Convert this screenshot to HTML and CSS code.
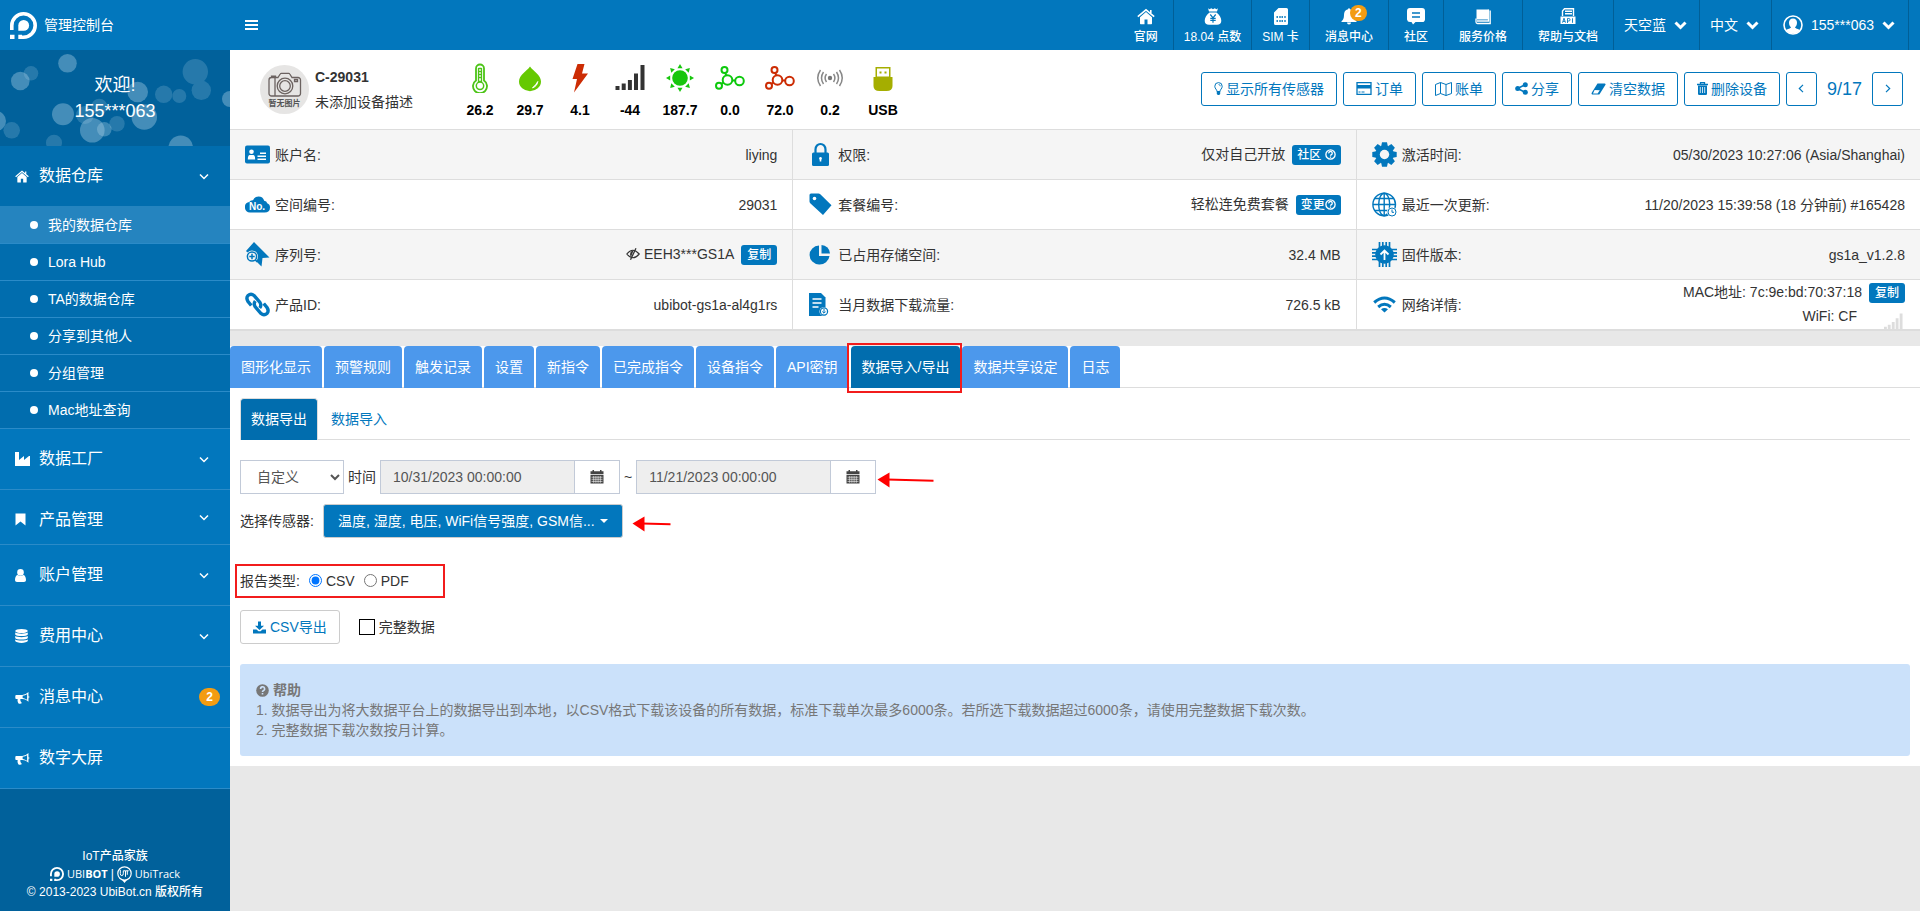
FILE: index.html
```html
<!DOCTYPE html>
<html lang="zh-CN">
<head>
<meta charset="utf-8">
<title>管理控制台</title>
<link rel="stylesheet" href="styles.css">
</head>
<body>
<svg class="defs" aria-hidden="true">
  <symbol id="logo" viewBox="0 0 27 27"><path d="M1.800 18V13.500A11.700 11.700 0 1 1 13.500 25.200H9" fill="none" stroke="currentColor" stroke-width="3.600"/><path d="M8.300 18.800V13.400a5.400 5.400 0 1 1 5.400 5.400z" fill="currentColor"/><path d="M0 22.800h4.500V27H0zM8.300 22.800H12V27H8.300z" fill="currentColor"/></symbol>
  <symbol id="chev" viewBox="0 0 10 7"><path d="M1 1.500l4 4 4-4" fill="none" stroke="currentColor" stroke-width="1.500"/></symbol>
  <symbol id="chevbold" viewBox="0 0 13 9"><path d="M1.500 1.500l5 5 5-5" fill="none" stroke="currentColor" stroke-width="3"/></symbol>
  <symbol id="home" viewBox="0 0 18 16"><path d="M9 3.600L3 8.700V15a.7.7 0 0 0 .7.700H7.500V11h3v4.700h3.800a.7.7 0 0 0 .7-.7V8.700z" fill="currentColor"/><path d="M.800 8.200L9 1.300l8.200 6.900M13.800 1.500v3" fill="none" stroke="currentColor" stroke-width="1.600"/></symbol>
  <symbol id="horn" viewBox="0 0 14.500 12"><path d="M1.500 3.500H7C9.500 3.500 11.500 2.200 13 .8v9.400C11.500 8.800 9.500 7.500 7 7.500H5.200c-.2 1.800.4 2.700 1.500 3.800-.7 1-2.700 1-3.500.2-.8-1.300-.9-2.500-.6-4H1.500C.7 7.500.3 7 .3 6.200V4.800c0-.8.4-1.300 1.200-1.300z" fill="currentColor"/><path d="M11.700 2.800v5.400C10.500 7.400 9 6.700 7.400 6.500V4.400C9 4.200 10.500 3.600 11.700 2.800z" fill="#0277bd"/><path d="M13 4.300a1.400 1.400 0 0 1 0 2.600z" fill="currentColor"/></symbol>
  <symbol id="cal" viewBox="0 0 14 14"><path d="M.5 1.200h2V0H4v1.200h6V0h1.500v1.200h2v3H.5zM.5 5h13v8.500H.5z" fill="currentColor"/><path d="M1.500 7.200h11M1.500 9.300h11M1.500 11.400h11M3.700 6v6.800M5.900 6v6.800M8.100 6v6.800M10.300 6v6.800" stroke="#fff" stroke-width=".6"/></symbol>
  <symbol id="mol" viewBox="0 0 30 24"><g fill="none" stroke="currentColor" stroke-width="2"><circle cx="9.500" cy="4" r="3"/><circle cx="12.500" cy="14" r="4.800"/><circle cx="24.500" cy="15" r="4.300"/><circle cx="4" cy="19.800" r="3"/><path d="M10.300 6.900l.8 2.400M17.200 14.400h3M8.400 16.700l-2 1.200"/></g></symbol>
  <symbol id="q" viewBox="0 0 10 10"><circle cx="5" cy="5" r="4.200" fill="none" stroke="currentColor" stroke-width="1.200"/><path d="M3.400 4A1.600 1.600 0 1 1 5.600 5.300Q5 5.600 5 6.100M5 6.900v1" fill="none" stroke="currentColor" stroke-width="1.200"/></symbol>
</svg>

<header class="top">
  <a class="brand" href="#"><svg class="brand-logo"><use href="#logo"/></svg><span>管理控制台</span></a>
  <button class="burger" type="button" aria-label="菜单"><i></i><i></i><i></i></button>
  <nav class="topnav">
    <a class="tn" href="#"><svg width="18" height="16"><use href="#home"/></svg>官网</a>
    <a class="tn slim" href="#"><svg width="18" height="17" viewBox="0 0 18 17"><path d="M4 .3l1.500.9L7.300.2 9 1.200l1.700-1 1.800 1 1.500-.9-1 3.200H5zM5.500 4.500h7c2.800 2 4.800 5.400 4.800 8.200 0 2.700-1.600 4-4.300 4H5c-2.700 0-4.300-1.300-4.300-4 0-2.800 2-6.200 4.800-8.200z" fill="#fff"/><path d="M6.300 6.500L9 9.800l2.700-3.300M9 9.500v5.300M6.300 10.400h5.400M6.300 12.400h5.400" fill="none" stroke="#0277bd" stroke-width="1.200"/></svg>18.04 点数</a>
    <a class="tn slim" href="#"><svg width="14" height="17" viewBox="0 0 14 17"><path d="M4.500 0H12.500A1.500 1.500 0 0 1 14 1.500v14a1.500 1.500 0 0 1-1.500 1.500h-11A1.500 1.500 0 0 1 0 15.500V4.500z" fill="#fff"/><path d="M3.200 8v2M6 8v2M8.200 8v2M11 8v2M3.200 12v2M6 12v2M8.200 12v2M11 12v2" stroke="#0277bd" stroke-width="1.300"/></svg>SIM 卡</a>
    <a class="tn bell" href="#"><svg width="16" height="16" viewBox="0 0 16 16"><path d="M7 .8a1 1 0 0 1 2 0c3 .6 4 2.800 4 5.600 0 3.600 1 5.200 2.500 6.300v.8H.5v-.8C2 11.600 3 10 3 6.400 3 3.600 4 1.400 7 .8zM6 14h4a2 2 0 0 1-4 0z" fill="#fff"/></svg>消息中心<b class="badge top-badge">2</b></a>
    <a class="tn" href="#"><svg width="18" height="17" viewBox="0 0 18 17"><path d="M3 0h12a3 3 0 0 1 3 3v8.500a2.500 2.500 0 0 1-3 2.500H8.500L6 16.500 4.500 14H3a3 3 0 0 1-3-2.500V3a3 3 0 0 1 3-3z" fill="#fff"/><path d="M5 5h8M5 9h8" stroke="#0277bd" stroke-width="1.600"/></svg>社区</a>
    <a class="tn" href="#"><svg width="16" height="16" viewBox="0 0 16 16"><path d="M1.500 1h12v10h-12z" fill="#fff"/><path d="M1 10v3.500A1.500 1.500 0 0 0 2.500 15h12.700V2M2 12.500h11.500V1" fill="none" stroke="#fff" stroke-width="1.300"/></svg>服务价格</a>
    <a class="tn" href="#"><svg width="16" height="17" viewBox="0 0 16 17"><path d="M2.500 8V3L4.500.8h9V8M5 3.300h7M5 5.800h7" fill="none" stroke="#fff" stroke-width="1.400"/><path d="M.5 8.500h15V16H.5z" fill="#fff"/><path d="M2.500 14.700l1.500-4.500 1.500 4.500M3 13.400h2M7.500 15v-4.500h1.300a1.200 1.200 0 0 1 0 2.500H7.500M12.500 10.300v4.500" fill="none" stroke="#0277bd" stroke-width=".9"/></svg>帮助与文档</a>
    <button class="tn wide" type="button">天空蓝<svg width="13" height="9"><use href="#chevbold"/></svg></button>
    <button class="tn wide" type="button">中文<svg width="13" height="9"><use href="#chevbold"/></svg></button>
    <button class="tn wide user" type="button"><svg width="20" height="20" viewBox="0 0 20 20"><circle cx="10" cy="10" r="9" fill="none" stroke="#fff" stroke-width="1.600"/><path d="M10 3.500c2.600 0 4 1.700 4 4.200 0 2-.9 3.800-2 4.500.3 1.500 3.500 1.200 4.700 3.300A9 9 0 0 1 3.300 15.500C4.500 13.400 7.700 13.700 8 12.200c-1.100-.7-2-2.500-2-4.500 0-2.500 1.400-4.200 4-4.200z" fill="#fff"/></svg>155***063<svg width="13" height="9"><use href="#chevbold"/></svg></button>
  </nav>
</header>

<div class="shell">
<aside class="side">
  <div class="welcome">
    <svg class="bokeh" viewBox="0 0 230 96" preserveAspectRatio="xMidYMid slice" aria-hidden="true"><g fill="#a8d0e6">
      <g opacity=".4"><circle cx="67.500" cy="13.300" r="9.300"/><circle cx="20.300" cy="31" r="9.300"/><circle cx="137.700" cy="42" r="10.300"/><circle cx="230" cy="49" r="8"/><circle cx="63" cy="64.300" r="11"/><circle cx="144.300" cy="67" r="12.700"/><circle cx="92.300" cy="80.300" r="12.300"/><circle cx="180.700" cy="97.700" r="12.300"/><circle cx="-4" cy="71" r="10"/></g>
      <g opacity=".22"><circle cx="31" cy="23.300" r="7.300"/><circle cx="195.300" cy="21.700" r="12.700"/><circle cx="201.300" cy="40.300" r="9.700"/><circle cx="163.700" cy="44.300" r="8.700"/><circle cx="179.300" cy="46" r="7"/><circle cx="85" cy="65" r="9"/><circle cx="99.300" cy="56.700" r="8"/><circle cx="117" cy="73.700" r="7.700"/><circle cx="11.700" cy="80.300" r="8.300"/><circle cx="54" cy="92.700" r="8"/></g>
      <circle cx="104.300" cy="79.300" r="7.300" opacity=".35"/></g></svg>
    <div class="hello">欢迎!<br>155***063</div>
  </div>
  <nav class="menu">
    <a class="mi open" href="#"><svg width="14" height="13"><use href="#home"/></svg><span>数据仓库</span><svg class="cv"><use href="#chev"/></svg></a>
    <ul class="sub">
      <li><a class="on" href="#">我的数据仓库</a></li>
      <li><a href="#">Lora Hub</a></li>
      <li><a href="#">TA的数据仓库</a></li>
      <li><a href="#">分享到其他人</a></li>
      <li><a href="#">分组管理</a></li>
      <li><a href="#">Mac地址查询</a></li>
    </ul>
    <a class="mi" href="#"><svg width="15" height="14" viewBox="0 0 15 14"><path d="M0 0h4v8l5-4v4l5-4h1v10H0z" fill="#fff"/></svg><span>数据工厂</span><svg class="cv"><use href="#chev"/></svg></a>
    <a class="mi short" href="#"><svg width="11" height="13" viewBox="0 0 11 13"><path d="M.5.500h10v12L5.500 8.500l-5 4z" fill="#fff"/></svg><span>产品管理</span><svg class="cv"><use href="#chev"/></svg></a>
    <a class="mi" href="#"><svg width="11" height="13" viewBox="0 0 11 13"><circle cx="5.500" cy="3.400" r="3.300" fill="#fff"/><path d="M0 11C0 8 1.200 6 2.800 6c1.500 1.300 4 1.300 5.400 0C9.800 6 11 8 11 11c0 1.200-.8 2-2 2H2c-1.200 0-2-.8-2-2z" fill="#fff"/></svg><span>账户管理</span><svg class="cv"><use href="#chev"/></svg></a>
    <a class="mi" href="#"><svg width="13" height="14" viewBox="0 0 13 14"><g fill="#fff"><ellipse cx="6.500" cy="2" rx="6.300" ry="2"/><path d="M.2 3.600c2 1.500 10.600 1.500 12.600 0v1.900c-1 2-11.600 2-12.600 0zM.2 7c2 1.500 10.600 1.500 12.600 0v1.900c-1 2-11.600 2-12.600 0zM.2 10.400c2 1.500 10.600 1.500 12.600 0v1.700c-1 2.400-11.600 2.400-12.600 0z"/></g></svg><span>费用中心</span><svg class="cv"><use href="#chev"/></svg></a>
    <a class="mi" href="#"><svg width="15" height="13"><use href="#horn"/></svg><span>消息中心</span><b class="badge side-badge">2</b></a>
    <a class="mi" href="#"><svg width="15" height="13"><use href="#horn"/></svg><span>数字大屏</span></a>
  </nav>
  <footer class="foot">
    <div>IoT产品家族</div>
    <div class="logos"><svg width="14" height="14"><use href="#logo"/></svg><span class="ubibot">UBI<b>BOT</b></span><span>|</span><svg width="15" height="17" viewBox="0 0 15 17"><circle cx="7.500" cy="7.500" r="6.700" fill="none" stroke="#fff" stroke-width="1.200"/><path d="M5 14h5l-2.500 3z" fill="#fff"/><path d="M3.300 3.800v3.800q0 2 1.500 2T6.300 7.600V4.800h2.200v6M8.700 4.800h3M10.300 4.800v4" fill="none" stroke="#fff"/></svg><span class="ubitrack">UbiTrack</span></div>
    <div>© 2013-2023 UbiBot.cn 版权所有</div>
  </footer>
</aside>

<main class="main">
  <section class="device">
    <svg class="avatar" viewBox="0 0 49 49" role="img"><circle cx="24.500" cy="24.500" r="24.500" fill="#e6e5e4"/><g fill="none" stroke="#6b6260" stroke-width="1.300"><path d="M11.500 12.500v-1.300h4v1.300M18 12.500l2.200-3.500q.4-.7 1.200-.7h7.200q.8 0 1.200.7l2.200 3.500H38a2.500 2.500 0 0 1 2.500 2.500v13.500A2.500 2.500 0 0 1 38 31H11.500A2.500 2.500 0 0 1 9 28.500V15a2.500 2.500 0 0 1 2.500-2.500zM15 13v18"/><circle cx="25" cy="21" r="7.800"/><circle cx="25" cy="21" r="5.300"/><path d="M34.500 14.500h3v2h-3z"/></g><text x="24.500" y="41" class="avatar-text">暂无图片</text></svg>
    <div class="dname"><strong>C-29031</strong><span>未添加设备描述</span></div>
    <div class="sensors">
      <div><svg width="30" height="30" viewBox="0 0 30 30"><path d="M11 5.500a4 4 0 0 1 8 0v12a7 7 0 1 1-8 0z" fill="none" stroke="#4cc417" stroke-width="1.800"/><circle cx="15" cy="22.800" r="3.700" fill="none" stroke="#4cc417" stroke-width="1.500"/><path d="M13.500 5v13.500h3V5M16.500 5.500h-3M16.500 8.500h-3M16.500 11.500h-3M16.500 14.500h-3" fill="none" stroke="#4cc417" stroke-width="1.300"/></svg>26.2</div>
      <div><svg width="30" height="30" viewBox="0 0 30 30"><path d="M15 3.500C18 8 26 12 26 18.500a11 9.700 0 0 1-22 0C4 12 12 8 15 3.500z" fill="#65c902"/><path d="M22.800 18.500q-.5 4.500-5.300 6.400 3.500-3 5.300-6.400z" fill="#fff" stroke="#fff"/></svg>29.7</div>
      <div><svg width="30" height="30" viewBox="0 0 30 30"><path d="M12.500 1h7L17 10.500h6L9 29.500l3-13.500H7.500z" fill="#cc2c04"/></svg>4.1</div>
      <div><svg width="30" height="30" viewBox="0 0 30 30"><path d="M.5 23h4v4h-4zM6.700 20.500h4V27h-4zM12.900 17h4v10h-4zM19 10.500h4V27h-4zM25.500 2h4v25h-4z" fill="#333"/></svg>-44</div>
      <div><svg width="30" height="30" viewBox="0 0 30 30"><g fill="#17c60d"><circle cx="15" cy="15" r="7.800"/><path id="ray" d="M12.500 5.200L15 1l2.500 4.200z"/><use href="#ray" transform="rotate(45 15 15)"/><use href="#ray" transform="rotate(90 15 15)"/><use href="#ray" transform="rotate(135 15 15)"/><use href="#ray" transform="rotate(180 15 15)"/><use href="#ray" transform="rotate(225 15 15)"/><use href="#ray" transform="rotate(270 15 15)"/><use href="#ray" transform="rotate(315 15 15)"/></g></svg>187.7</div>
      <div><svg class="green" width="30" height="30"><use href="#mol"/></svg>0.0</div>
      <div><svg class="red" width="30" height="30"><use href="#mol"/></svg>72.0</div>
      <div><svg width="30" height="30" viewBox="0 0 30 30"><circle cx="15" cy="15" r="2.200" fill="#777"/><path d="M11.500 11q-2.800 4 0 8M18.500 11q2.800 4 0 8M8.500 9q-4 6 0 12M21.500 9q4 6 0 12M5.500 7q-5.500 8 0 16M24.500 7q5.500 8 0 16" fill="none" stroke="#888" stroke-width="1.500"/></svg>0.2</div>
      <div class="usb"><svg width="30" height="30" viewBox="0 0 30 30"><path d="M7.500 4h15v10h2v9q0 5-6 5h-7q-6 0-6-5v-9h2z" fill="#a5ae00"/><path d="M9 5.500h12v8H9z" fill="#fff"/><path d="M11.500 8.500h2v2h-2zM16.500 8.500h2v2h-2z" fill="#a5ae00"/></svg>USB</div>
    </div>
    <div class="acts">
      <button class="btn" type="button"><svg width="9" height="13" viewBox="0 0 9 13"><path d="M3 9.500C3 7.500.8 6.800.8 4.300a3.700 3.700 0 0 1 7.400 0C8.200 6.800 6 7.500 6 9.500z" fill="none" stroke="currentColor"/><path d="M2.800 9h3.400v3l-1 .9H3.800l-1-.9z" fill="currentColor"/><path d="M4.500 2.500q1.800 0 1.800 1.800" fill="none" stroke="currentColor" stroke-width=".8"/></svg>显示所有传感器</button>
      <button class="btn" type="button"><svg width="16" height="13" viewBox="0 0 16 13"><path d="M1 .700h14v11.600H1z" fill="none" stroke="currentColor" stroke-width="1.300"/><path d="M1 3h14v3.500H1zM2.500 9.500h2v1h-2zM5.500 9.500h3v1h-3z" fill="currentColor"/></svg>订单</button>
      <button class="btn" type="button"><svg width="17" height="14" viewBox="0 0 17 14"><path d="M.5 2.500l5-2 5.500 2 5.500-2v11l-5.500 2-5.500-2-5 2zM5.500.500v11M11 2.500v11" fill="none" stroke="currentColor"/></svg>账单</button>
      <button class="btn" type="button"><svg width="13" height="13" viewBox="0 0 13 13"><path d="M10.500 2.500l-8 4 8 4" fill="none" stroke="currentColor" stroke-width="1.500"/><g fill="currentColor"><circle cx="10.300" cy="2.700" r="2.500"/><circle cx="2.700" cy="6.500" r="2.500"/><circle cx="10.300" cy="10.300" r="2.500"/></g></svg>分享</button>
      <button class="btn" type="button"><svg width="15" height="12" viewBox="0 0 15 12"><path d="M6.500.500h7.300q1 .3.700 1.300L8.700 11q-.4.500-1 .5H1.200Q.2 11 .6 10z" fill="currentColor"/><path d="M3.600 7l5.200.2-2.200 3.300H2z" fill="#fff"/></svg>清空数据</button>
      <button class="btn" type="button"><svg width="11" height="13" viewBox="0 0 11 13"><path d="M3.500 2V.600h4V2M0 2.500h11" fill="none" stroke="currentColor" stroke-width="1.300"/><path d="M1 3.500h9v8.200q0 1.300-1.300 1.300H2.300Q1 13 1 11.700z" fill="currentColor"/><path d="M3.300 5v6M5.500 5v6M7.700 5v6" stroke="#fff" stroke-width=".8"/></svg>删除设备</button>
      <button class="btn sq" type="button" aria-label="上一个"><svg width="6" height="9" viewBox="0 0 6 9"><path d="M5 .800L1.300 4.500 5 8.200" fill="none" stroke="currentColor" stroke-width="1.200"/></svg></button>
      <span class="page">9/17</span>
      <button class="btn sq" type="button" aria-label="下一个"><svg width="6" height="9" viewBox="0 0 6 9"><path d="M1 .800l3.700 3.700L1 8.200" fill="none" stroke="currentColor" stroke-width="1.200"/></svg></button>
    </div>
  </section>

  <section class="info">
    <div class="cell"><svg viewBox="0 0 25 25"><rect y="3.500" width="25" height="18" rx="2" fill="currentColor"/><g fill="#fff"><circle cx="6.500" cy="9.800" r="2.300"/><path d="M2.800 17.500q0-4.500 2-4.500h3.400q2 0 2 4.500zM15 10.500h6V12h-6zM12.500 13.500H21V15h-8.500zM12.500 16.500H21V18h-8.500z"/></g></svg><span>账户名:</span><div>liying</div></div>
    <div class="cell"><svg viewBox="0 0 25 25"><path d="M7.500 12V7.500a5 5.500 0 0 1 10 0V12" fill="none" stroke="currentColor" stroke-width="2.200"/><rect x="4" y="10.500" width="17" height="13.500" rx="1.500" fill="currentColor"/><path d="M12.500 15a1.500 1.500 0 0 1 .8 2.700v1.800h-1.600v-1.800a1.500 1.500 0 0 1 .8-2.700z" fill="#fff"/></svg><span>权限:</span><div>仅对自己开放<button class="tag" type="button">社区 <svg width="11" height="11"><use href="#q"/></svg></button></div></div>
    <div class="cell"><svg viewBox="0 0 25 25"><g fill="currentColor"><circle cx="12.500" cy="12.500" r="9.300"/><path id="tooth" d="M10 .3h5l.8 4h-6.600z"/><use href="#tooth" transform="rotate(45 12.500 12.500)"/><use href="#tooth" transform="rotate(90 12.500 12.500)"/><use href="#tooth" transform="rotate(135 12.500 12.500)"/><use href="#tooth" transform="rotate(180 12.500 12.500)"/><use href="#tooth" transform="rotate(225 12.500 12.500)"/><use href="#tooth" transform="rotate(270 12.500 12.500)"/><use href="#tooth" transform="rotate(315 12.500 12.500)"/></g><circle cx="12.500" cy="12.500" r="4.700" fill="#f5f5f5"/></svg><span>激活时间:</span><div>05/30/2023 10:27:06 (Asia/Shanghai)</div></div>

    <div class="cell"><svg viewBox="0 0 25 25"><path d="M5 20.500a5.300 5.300 0 0 1-.8-10.500Q5.300 8 8 8.200 9.500 4.500 13.500 4.500q4.500 0 5.700 4.300 2.500.2 3 2.500 2.800 1 2.800 4.200 0 5-5.500 5z" fill="currentColor"/><text x="4" y="18" class="no-text">No.</text></svg><span>空间编号:</span><div>29031</div></div>
    <div class="cell"><svg viewBox="0 0 25 25"><path d="M3 1.500h7.500q1 0 1.800.8l11.200 11-8.500 9.700L2.500 11.500Q1.500 10.500 1.500 9.500V3Q1.500 1.500 3 1.500z" fill="currentColor"/><circle cx="6.500" cy="6.500" r="1.800" fill="#fff"/></svg><span>套餐编号:</span><div>轻松连免费套餐<button class="tag" type="button">变更<svg width="11" height="11"><use href="#q"/></svg></button></div></div>
    <div class="cell"><svg viewBox="0 0 25 25"><g fill="none" stroke="currentColor" stroke-width="1.400"><circle cx="12.200" cy="12.500" r="11.300"/><ellipse cx="12.200" cy="12.500" rx="5.500" ry="11.300"/><path d="M12.200 1v23M1 12.500h22.500M3 6.500h18.500M3 18.500h18.500"/></g><circle cx="20" cy="20" r="5" fill="#fff"/><circle cx="20" cy="20" r="4" fill="none" stroke="currentColor"/><path d="M20 17.500V20.300h2" fill="none" stroke="currentColor"/></svg><span>最近一次更新:</span><div>11/20/2023 15:39:58 (18 分钟前) #165428</div></div>

    <div class="cell"><svg viewBox="0 0 25 25"><path d="M9 0l15.500 15.500-7 .5-1 8.500L1 9z" fill="currentColor"/><circle cx="7" cy="14.500" r="6" fill="#f5f5f5"/><circle cx="7" cy="14.500" r="4.600" fill="none" stroke="currentColor" stroke-width="1.500"/><path d="M7 11.800v5.400M4.300 14.500h5.400M10.300 18l2 2" stroke="currentColor" stroke-width="1.500"/></svg><span>序列号:</span><div><svg class="eye" viewBox="0 0 14 12"><path d="M.8 6q6-7.500 12.400 0-6.400 7.500-12.400 0z" fill="none" stroke="currentColor" stroke-width="1.200"/><path d="M7.500 2.500L5 9Q3.500 7 4.500 4.500 5.500 2.500 7.500 2.500z" fill="currentColor"/><path d="M10 .3L4.500 11.700" stroke="currentColor" stroke-width="1.300"/></svg> EEH3***GS1A<button class="tag copy" type="button">复制</button></div></div>
    <div class="cell"><svg viewBox="0 0 25 25"><path d="M11 3.500V14h10.500A10 9.500 0 1 1 11 3.500z" fill="currentColor"/><path d="M13.500 3a9 9 0 0 1 8.500 8.500h-8.500z" fill="currentColor"/></svg><span>已占用存储空间:</span><div>32.4 MB</div></div>
    <div class="cell"><svg viewBox="0 0 25 25"><circle cx="12.500" cy="12.500" r="9.300" fill="currentColor"/><path d="M7.500 0v25M10.800 0v25M14.200 0v25M17.500 0v25M0 7.500h25M0 10.800h25M0 14.200h25M0 17.500h25" stroke="currentColor" stroke-width="1.700"/><path d="M12.500 18V9M8.500 12.500l4-4 4 4" fill="none" stroke="#fff" stroke-width="1.800"/></svg><span>固件版本:</span><div>gs1a_v1.2.8</div></div>

    <div class="cell"><svg viewBox="0 0 25 25"><g fill="none" stroke="currentColor" stroke-width="3.400"><path d="M6.300 13.500L3 9.500Q.8 6 3 3.500q3-2.500 6 0l6 7q1.700 3-.3 5.500"/><path d="M18.700 11.500l3.300 4q2.200 3.500 0 6-3 2.500-6 0l-6-7q-1.700-3 .3-5.500"/></g></svg><span>产品ID:</span><div>ubibot-gs1a-al4g1rs</div></div>
    <div class="cell"><svg viewBox="0 0 25 25"><path d="M1 1h12l4.500 4.500V24H1z" fill="currentColor"/><path d="M4.500 7h9M4.500 11h9M4.500 15h6" stroke="#fff" stroke-width="1.300"/><circle cx="16" cy="19.500" r="4.500" fill="#fff"/><circle cx="16" cy="19.500" r="3.600" fill="none" stroke="currentColor" stroke-width="1.200"/><path d="M16 17v4M14.300 19.500L16 21.200l1.700-1.700" fill="none" stroke="currentColor"/></svg><span>当月数据下载流量:</span><div>726.5 kB</div></div>
    <div class="cell"><svg viewBox="0 0 25 25"><g fill="none" stroke="currentColor" stroke-width="3"><path d="M2.200 10.500q10.300-9 20.600 0M6.200 15q6.300-5.500 12.600 0"/></g><path d="M9 17.200q3.500-2.500 7 0l-3.500 3.300z" fill="currentColor"/></svg><span>网络详情:</span><div class="net"><p>MAC地址: 7c:9e:bd:70:37:18<button class="tag copy" type="button">复制</button></p><p>WiFi: CF<svg class="sig" viewBox="0 0 20 18"><path d="M0 15h3v3H0zM4 13h3v5H4zM8.200 10h3v8h-3zM12.300 6h3v12h-3zM16.500 1h3v17h-3z" fill="#ddd"/></svg></p></div></div>
  </section>

  <section class="work">
    <nav class="tabs">
      <a href="#">图形化显示</a><a href="#">预警规则</a><a href="#">触发记录</a><a href="#">设置</a><a href="#">新指令</a><a href="#">已完成指令</a><a href="#">设备指令</a><a href="#">API密钥</a><a class="on" href="#">数据导入/导出</a><a href="#">数据共享设定</a><a href="#">日志</a>
    </nav>
    <div class="panel">
      <nav class="subtabs"><a class="on" href="#">数据导出</a><a href="#">数据导入</a></nav>
      <div class="row range">
        <select aria-label="时间范围"><option>自定义</option></select>
        <label for="from">时间</label>
        <span class="dt"><input id="from" type="text" value="10/31/2023 00:00:00" readonly><button type="button" aria-label="开始日期"><svg width="14" height="14"><use href="#cal"/></svg></button></span>
        <label for="to">~</label>
        <span class="dt"><input id="to" type="text" value="11/21/2023 00:00:00" readonly><button type="button" aria-label="结束日期"><svg width="14" height="14"><use href="#cal"/></svg></button></span>
        <svg class="arrow" width="58" height="16" viewBox="0 0 58 16"><path d="M10 7.500l46.500 1.300" stroke="red" stroke-width="2"/><path d="M.500 7.500L12.500.500v15z" fill="red"/></svg>
      </div>
      <div class="row pick">
        <span id="sens">选择传感器:</span>
        <button class="multi" type="button" aria-describedby="sens">温度, 湿度, 电压, WiFi信号强度, GSM信...<i></i></button>
        <svg class="arrow" width="40" height="16" viewBox="0 0 40 16"><path d="M10 7.500l28.500.7" stroke="red" stroke-width="2"/><path d="M.500 7.500L12.500.500v15z" fill="red"/></svg>
      </div>
      <div class="row kind">
        <span>报告类型:</span>
        <label><input type="radio" name="kind" checked>CSV</label>
        <label><input type="radio" name="kind">PDF</label>
      </div>
      <div class="row export">
        <button class="csv" type="button"><svg width="13" height="13" viewBox="0 0 13 13"><path d="M5 .500h3v4.300h3L6.500 9 2 4.800h3zM0 8.500h3.500l2 1.800h2l2-1.800H13v4H0z" fill="currentColor"/></svg>CSV导出</button>
        <label><input type="checkbox">完整数据</label>
      </div>
      <div class="help">
        <div class="help-title"><svg width="13" height="13" viewBox="0 0 13 13"><circle cx="6.500" cy="6.500" r="6.300" fill="#777"/><path d="M4.600 5A2 2 0 1 1 7.300 6.700Q6.500 7 6.500 8M6.500 9v1.500" fill="none" stroke="#cbe1fa" stroke-width="1.600"/></svg><b>帮助</b></div>
        <p>1. 数据导出为将大数据平台上的数据导出到本地，以CSV格式下载该设备的所有数据，标准下载单次最多6000条。若所选下载数据超过6000条，请使用完整数据下载次数。</p>
        <p>2. 完整数据下载次数按月计算。</p>
      </div>
    </div>
  </section>
</main>
</div>
</body>
</html>
```
FILE: styles.css
```css
* { box-sizing: border-box; }
body { margin: 0; min-height: 100vh; display: flex; flex-direction: column; background: #e8e8e8; color: #333; font: 14px/20px "Liberation Sans", "Noto Sans CJK SC", sans-serif; }
a { color: inherit; text-decoration: none; }
button, input, select { font: inherit; margin: 0; }
button { cursor: pointer; }
p { margin: 0; }
.defs { position: absolute; width: 0; height: 0; }

.top { height: 50px; display: flex; align-items: center; background: #0277bd; color: #fff; }
.brand { width: 230px; padding-left: 10px; display: flex; align-items: center; gap: 7px; }
.brand-logo { width: 27px; height: 27px; }
.burger { display: flex; flex-direction: column; gap: 2px; padding: 0; margin-left: 15px; border: 0; background: none; }
.burger i { width: 13px; height: 2px; background: #fff; }
.topnav { margin-left: auto; margin-right: 11px; display: flex; height: 50px; }
.tn { display: flex; flex-direction: column; align-items: center; gap: 2px; padding: 8px 15px 0; border: 0; border-right: 1px solid #015f97; background: none; color: #fff; font-size: 12px; font-weight: 500; white-space: nowrap; position: relative; }
.tn > svg { height: 17px; }
.slim { padding: 8px 10px 0; }
.wide { flex-direction: row; font-size: 14px; font-weight: 400; padding: 0 12px 0 10px; gap: 8px; }
.wide > svg { height: 9px; }
.user { padding: 0 13px 0 11px; }
.user > svg:first-child { height: 20px; }
.badge { background: #f39c12; color: #fff; font-size: 12px; line-height: 18px; border-radius: 9px; text-align: center; }
.top-badge { position: absolute; left: 40px; top: 5px; width: 17px; line-height: 16px; }

.shell { flex: 1; display: flex; }
.side { width: 230px; flex: none; display: flex; flex-direction: column; background: #01619b; color: #fff; }
.welcome { height: 96px; position: relative; overflow: hidden; text-align: center; }
.bokeh { position: absolute; inset: 0; width: 100%; height: 100%; }
.hello { position: relative; padding-top: 22px; font-size: 18px; line-height: 26px; }
.menu { background: #0277bd; }
.mi { display: flex; align-items: center; height: 61px; padding: 0 21px 0 15px; border-bottom: 1px solid #2b8bc8; font-size: 16px; }
.mi > svg:first-child { flex: none; }
.mi span { flex: 1; margin-left: 9px; }
.mi > svg[width="14"] + span { margin-left: 10px; }
.mi > svg[width="13"] + span { margin-left: 11px; }
.mi > svg[width="11"] + span { margin-left: 13px; }
.mi.open { height: 60px; background: #016dae; border: 0; }
.mi.short { height: 55px; }
.mi.short > svg:first-child, .mi.short span { margin-top: 5px; }
.cv { width: 10px; height: 7px; }
.side-badge { width: 21px; margin-right: -11px; }
.sub { list-style: none; margin: 0; padding: 0; background: #016dae; }
.sub a { display: flex; align-items: center; height: 37px; padding-left: 30px; gap: 10px; border-bottom: 1px solid #2b8bc8; }
.sub li:first-child a { height: 38px; }
.sub a::before { content: ""; width: 8px; height: 8px; border-radius: 50%; background: #fff; }
.sub a.on { background: #2584bf; }
.foot { margin-top: auto; padding-bottom: 10px; text-align: center; font-size: 12px; line-height: 18px; font-weight: 500; }
.logos { display: flex; align-items: center; justify-content: center; gap: 3px; }
.ubibot { font-family: "Open Sans", sans-serif; font-size: 11px; font-weight: 400; }
.ubitrack { font-family: "Open Sans", sans-serif; font-size: 11px; font-weight: 400; }

.main { flex: 1; min-width: 0; }
.device { display: flex; align-items: center; height: 80px; background: #fff; border-bottom: 1px solid #ddd; padding: 0 17px 0 30px; }
.avatar { width: 49px; height: 49px; flex: none; }
.avatar-text { font: bold 8px "Noto Sans CJK SC", sans-serif; fill: #555; text-anchor: middle; }
.dname { display: flex; flex-direction: column; gap: 5px; margin-left: 6px; width: 140px; }
.sensors { display: flex; color: #000; font-weight: bold; }
.sensors div { width: 50px; display: flex; flex-direction: column; align-items: center; gap: 7px; padding-top: 4px; }
.sensors .usb { width: 56px; }
.green { color: #0dc90d; }
.red { color: #cc2c04; }
.acts { margin-left: auto; display: flex; align-items: center; gap: 6px; padding-bottom: 2px; }
.btn { display: flex; align-items: center; justify-content: center; gap: 3px; height: 34px; padding: 0 12px; border: 1px solid #0277bd; border-radius: 3px; background: #fff; color: #0277bd; white-space: nowrap; }
.sq { width: 31px; padding: 0; }
.page { padding: 0 4px; font-size: 18px; color: #0277bd; }

.info { display: grid; grid-template-columns: repeat(3, 1fr); background: #fff; border-bottom: 1px solid #ddd; }
.cell { display: flex; align-items: center; height: 50px; padding: 0 15px; border-right: 1px solid #ddd; border-bottom: 1px solid #ddd; }
.cell:nth-child(3n) { border-right: 0; }
.cell:nth-child(6n+1), .cell:nth-child(6n+2), .cell:nth-child(6n+3) { background: #f5f5f5; }
.cell > svg { width: 25px; height: 25px; flex: none; margin-right: 5px; color: #0277bd; }
.cell > div { margin-left: auto; text-align: right; }
.no-text { font: bold 10px "Liberation Sans", sans-serif; fill: #fff; }
.tag { margin-left: 7px; padding: 0 5px; height: 20px; border: 0; border-radius: 3px; background: #0277bd; color: #fff; font-size: 12px; line-height: 20px; font-weight: 500; }
.tag svg { vertical-align: -1px; }
.copy { padding: 0 6px; }
.eye { width: 14px; height: 12px; vertical-align: -1px; }
.net { padding-bottom: 2px; }
.net p { line-height: 24px; }
.net .sig { width: 19px; height: 18px; margin: 0 2px 0 27px; vertical-align: -9px; }
.net p:last-child { height: 24px; }

.work { margin-top: 15px; background: #fff; }
.tabs { display: flex; gap: 2px; border-bottom: 1px solid #ddd; }
.tabs a { height: 42px; margin-bottom: -1px; padding: 0 11px; border-radius: 4px 4px 0 0; background: #4c98ec; color: #fff; line-height: 42px; position: relative; white-space: nowrap; }
.tabs .on { background: #016dae; }
.tabs .on::after { content: ""; position: absolute; inset: -3px -2px -5px -4px; border: 2px solid #f21c1c; z-index: 1; }
.panel { padding: 10px 10px 10px; }
.subtabs { display: flex; gap: 2px; border-bottom: 1px solid #ddd; }
.subtabs a { height: 42px; padding: 0 11px; line-height: 42px; color: #0277bd; margin-bottom: -1px; border-radius: 4px 4px 0 0; }
.subtabs .on { background: #016dae; color: #fff; padding: 0 10px; border: 1px solid #ddd; border-bottom: 0; line-height: 40px; }
.row { display: flex; align-items: center; }
.range { margin-top: 20px; }
.range label { margin: 0 4px; }
.range select { width: 104px; height: 34px; padding: 6px 12px; border: 1px solid #c2cad8; border-radius: 0; background: #fff; color: #555; }
.dt { display: flex; }
.dt input { width: 195px; height: 34px; padding: 0 12px; border: 1px solid #c2cad8; background: #eee; color: #555; }
.dt button { width: 46px; margin-left: -1px; padding: 0; border: 1px solid #c2cad8; background: #fff; color: #444; display: flex; align-items: center; justify-content: center; }
.arrow { margin: 5px 0 0 1px; }
.pick { margin-top: 10px; }
.multi { display: flex; align-items: center; gap: 5px; height: 34px; margin-left: 9px; padding: 0 14px; border: 1px solid #ccc; border-radius: 3px; background: #0277bd; color: #fff; }
.multi i { border: 4px solid transparent; border-top-color: #fff; border-bottom: 0; }
.pick .arrow { margin-left: 9px; }
.kind { margin-top: 26px; height: 34px; position: relative; width: 200px; }
.kind::after { content: ""; position: absolute; inset: 0 -5px 0 -5px; border: 2px solid #f21c1c; pointer-events: none; }
.kind label { display: flex; align-items: center; margin-left: 9px; }
.kind input { width: 13px; height: 13px; margin: 0 4px 2px 0; }
.export { margin-top: 12px; }
.csv { height: 34px; padding: 0 12px; display: flex; align-items: center; gap: 4px; border: 1px solid #ccc; border-radius: 3px; background: #fff; color: #0277bd; }
.export label { display: flex; align-items: center; gap: 4px; margin-left: 19px; }
.export input { appearance: none; width: 16px; height: 16px; border: 1px solid #000; background: #fff; }
.help { margin-top: 20px; padding: 16px; background: #cbe1fa; border-radius: 3px; color: #777; }
.help-title { display: flex; align-items: center; gap: 4px; }
```
